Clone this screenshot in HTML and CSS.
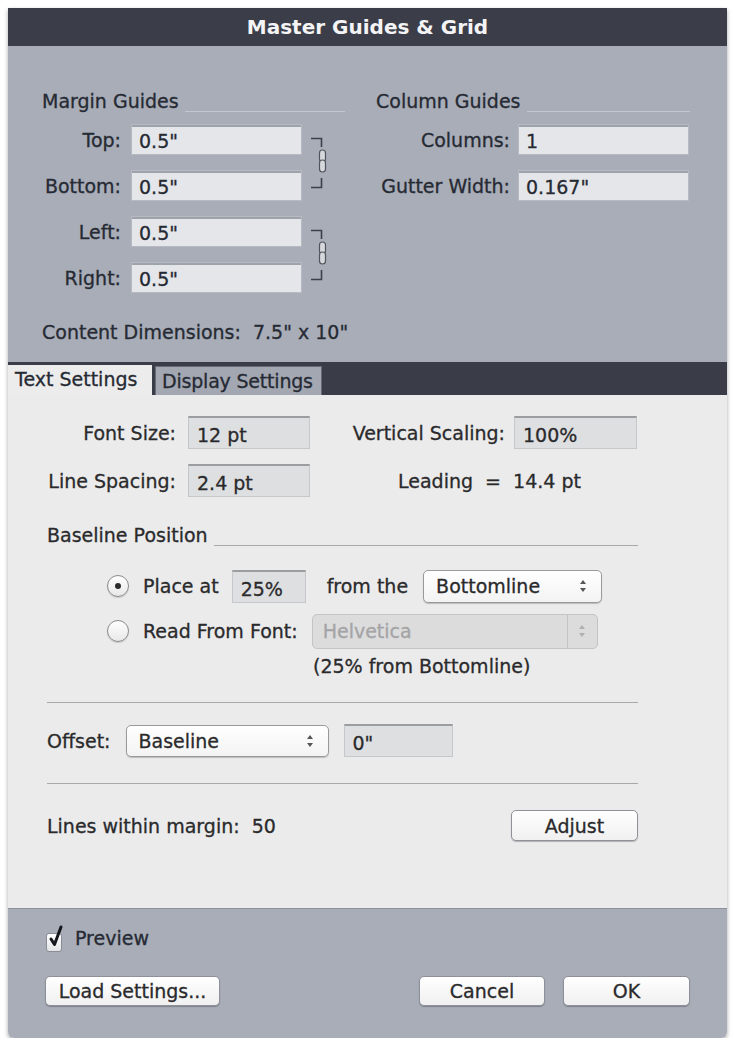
FILE: index.html
```html
<!DOCTYPE html>
<html lang="en">
<head>
    <meta charset="UTF-8">
    <title>Master Guides &amp; Grid</title>
    <link rel="stylesheet" href="styles.css">
</head>
<body>
    <div class="dialog">
        <div class="titlebar">Master Guides &amp; Grid</div>

        <div class="upper">
            <div class="group margin-group">
                <div class="group-title"><span>Margin Guides</span><i class="rule"></i></div>
                <div class="pairs">
                    <div class="pair">
                        <div class="pair-rows">
                            <div class="row"><label>Top:</label><div class="field">0.5"</div></div>
                            <div class="row"><label>Bottom:</label><div class="field">0.5"</div></div>
                        </div>
                        <svg class="link" width="24" height="52" viewBox="0 0 24 52">
                            <path d="M2 1.5H12.5V10M12.5 41V50.5H2" fill="none" stroke="#3c4049" stroke-width="1.6"/>
                            <rect x="10.5" y="13" width="6" height="12" rx="3" fill="#d6d8dc" stroke="#50545c" stroke-width="1.2"/>
                            <rect x="10.5" y="23" width="6" height="12" rx="3" fill="#d6d8dc" stroke="#50545c" stroke-width="1.2"/>
                        </svg>
                    </div>
                    <div class="pair">
                        <div class="pair-rows">
                            <div class="row"><label>Left:</label><div class="field">0.5"</div></div>
                            <div class="row"><label>Right:</label><div class="field">0.5"</div></div>
                        </div>
                        <svg class="link" width="24" height="52" viewBox="0 0 24 52">
                            <path d="M2 1.5H12.5V10M12.5 41V50.5H2" fill="none" stroke="#3c4049" stroke-width="1.6"/>
                            <rect x="10.5" y="13" width="6" height="12" rx="3" fill="#d6d8dc" stroke="#50545c" stroke-width="1.2"/>
                            <rect x="10.5" y="23" width="6" height="12" rx="3" fill="#d6d8dc" stroke="#50545c" stroke-width="1.2"/>
                        </svg>
                    </div>
                </div>
                <div class="dims">Content Dimensions:&nbsp; 7.5" x 10"</div>
            </div>

            <div class="group column-group">
                <div class="group-title"><span>Column Guides</span><i class="rule"></i></div>
                <div class="col-rows">
                    <div class="row"><label>Columns:</label><div class="field">1</div></div>
                    <div class="row"><label>Gutter Width:</label><div class="field">0.167"</div></div>
                </div>
            </div>
        </div>

        <div class="tabs">
            <div class="tab active">Text Settings</div>
            <div class="tab">Display Settings</div>
        </div>

        <div class="panel">
            <div class="metrics">
                <label>Font Size:</label>
                <div class="box">12 pt</div>
                <label>Vertical Scaling:</label>
                <div class="box">100%</div>
                <label>Line Spacing:</label>
                <div class="box">2.4 pt</div>
                <div class="leading">Leading&nbsp; = &nbsp;14.4 pt</div>
            </div>

            <div class="section-title"><span>Baseline Position</span><i class="rule"></i></div>

            <div class="radio-row">
                <span class="radio checked"></span>
                <span class="opt-label">Place at</span>
                <div class="box pct">25%</div>
                <span class="from">from the</span>
                <div class="popup bottomline">Bottomline<svg class="arrows" width="8" height="14" viewBox="0 0 8 14"><path d="M4 1L7 5H1ZM4 13L7 9H1Z" fill="#555"/></svg></div>
            </div>
            <div class="radio-row second">
                <span class="radio"></span>
                <span class="opt-label">Read From Font:</span>
                <div class="popup disabled">Helvetica<span class="sep"><svg width="8" height="14" viewBox="0 0 8 14"><path d="M4 1L7 5H1ZM4 13L7 9H1Z" fill="#b0b0b0"/></svg></span></div>
            </div>
            <div class="note">(25% from Bottomline)</div>

            <hr class="divider">

            <div class="offset-row">
                <span>Offset:</span>
                <div class="popup offset">Baseline<svg class="arrows" width="8" height="14" viewBox="0 0 8 14"><path d="M4 1L7 5H1ZM4 13L7 9H1Z" fill="#555"/></svg></div>
                <div class="box zero">0"</div>
            </div>

            <hr class="divider">

            <div class="lines-row">
                <span>Lines within margin:&nbsp; 50</span>
                <button class="btn adjust">Adjust</button>
            </div>
        </div>

        <div class="footer">
            <div class="preview">
                <span class="check"><svg width="20" height="26" viewBox="0 0 20 26"><path d="M5 16L8.5 21.5L15 4" fill="none" stroke="#15171c" stroke-width="3" stroke-linecap="round" stroke-linejoin="round"/></svg></span>
                <span>Preview</span>
            </div>
            <div class="buttons">
                <button class="btn load">Load Settings...</button>
                <button class="btn cancel">Cancel</button>
                <button class="btn ok">OK</button>
            </div>
        </div>
    </div>
</body>
</html>
```

FILE: styles.css
```css
body {
    margin: 0;
    background-color: #ffffff;
    font-family: "DejaVu Sans", Verdana, sans-serif;
    font-size: 19px;
    color: #262a33;
    -webkit-text-stroke: 0.3px currentColor;
}
.dialog {
    margin: 8px 0 0 8px;
    width: 719px;
    border-radius: 0 0 6px 6px;
    box-shadow: 0 2px 4px rgba(0, 0, 0, 0.35);
    overflow: hidden;
}
.titlebar {
    height: 38px;
    line-height: 38px;
    background-color: #3b3e48;
    color: #f4f4f6;
    font-weight: bold;
    font-size: 20px;
    text-align: center;
    -webkit-text-stroke: 0;
}

/* top gray area */
.upper {
    height: 316px;
    box-sizing: border-box;
    padding: 44px 37px 0 34px;
    background-color: #a8adb8;
    display: grid;
    grid-template-columns: 334px 1fr;
}
.group-title,
.section-title {
    display: flex;
    align-items: flex-end;
    height: 22px;
    line-height: 22px;
}
.rule {
    flex: 1;
    margin-left: 6px;
    border-bottom: 1px solid #c3c6cd;
}
.margin-group .group-title {
    width: 303px;
}
.pairs {
    margin-top: 12px;
    display: flex;
    flex-direction: column;
    gap: 15px;
}
.pair {
    display: flex;
    align-items: center;
    gap: 7px;
}
.pair-rows,
.col-rows {
    display: flex;
    flex-direction: column;
    gap: 15px;
}
.row {
    display: flex;
    align-items: center;
    gap: 10px;
}
.margin-group label {
    width: 79px;
    text-align: right;
}
.col-rows {
    margin-top: 12px;
}
.column-group label {
    width: 134px;
    text-align: right;
}
.column-group .row {
    gap: 8px;
}
.field {
    width: 171px;
    height: 31px;
    line-height: 32px;
    box-sizing: border-box;
    padding-left: 7px;
    background-color: #e5e6e9;
    border: 1px solid #b7bac2;
    box-shadow: inset 0 2px 0 #9ea2ab;
}
.dims {
    margin-top: 28px;
    line-height: 22px;
}

/* tab strip */
.tabs {
    height: 33px;
    background-color: #3a3d47;
    display: flex;
    align-items: flex-end;
}
.tab {
    height: 29px;
    line-height: 28px;
    box-sizing: border-box;
    padding: 0 6px;
    white-space: nowrap;
    letter-spacing: -0.2px;
    background-color: #a2a7b2;
    border: 1px solid #676b74;
    border-bottom: none;
    margin-left: 3px;
    width: 167px;
}
.tab.active {
    margin-left: 0;
    height: 30px;
    width: 144px;
    letter-spacing: 0;
    background-color: #ececec;
    border: none;
    padding-left: 7px;
}

/* light settings panel */
.panel {
    height: 513px;
    box-sizing: border-box;
    padding: 21px 89px 0 39px;
    background-color: #ebebeb;
    color: #2a2a2c;
}
.metrics {
    display: grid;
    grid-template-columns: 141px 122px 204px 123px;
    row-gap: 15px;
    align-items: center;
}
.metrics label {
    text-align: right;
    padding-right: 12px;
}
.metrics label:nth-of-type(2) {
    padding-right: 9px;
}
.box {
    height: 33px;
    line-height: 35px;
    box-sizing: border-box;
    padding-left: 8px;
    background-color: #dedfe1;
    border: 1px solid #c6c7ca;
    border-top: 2px solid #9c9da1;
}
.leading {
    grid-column: 3 / 5;
    padding-left: 88px;
}
.section-title {
    margin-top: 27px;
}
.section-title .rule {
    border-bottom-color: #a9a9a9;
}
.radio-row {
    margin-top: 23px;
    padding-left: 60px;
    display: flex;
    align-items: center;
    height: 34px;
}
.radio-row.second {
    margin-top: 11px;
}
.radio {
    width: 22px;
    height: 22px;
    box-sizing: border-box;
    border-radius: 50%;
    border: 1px solid #8b8b8d;
    background: linear-gradient(#ffffff, #e8e8e8);
    box-shadow: 0 1px 1px rgba(0, 0, 0, 0.15);
    display: flex;
    align-items: center;
    justify-content: center;
}
.radio.checked::after {
    content: "";
    width: 6px;
    height: 6px;
    border-radius: 50%;
    background-color: #2b2b2b;
}
.opt-label {
    margin-left: 14px;
}
.pct {
    width: 74px;
    margin-left: 13px;
}
.from {
    margin-left: 21px;
}
.popup {
    height: 33px;
    box-sizing: border-box;
    padding-left: 12px;
    display: flex;
    align-items: center;
    justify-content: space-between;
    border: 1px solid #9a9a9c;
    border-radius: 5px;
    background: linear-gradient(#ffffff, #f3f3f3);
    box-shadow: 0 1px 1px rgba(0, 0, 0, 0.2);
}
.popup .arrows {
    margin-right: 14px;
}
.bottomline {
    width: 179px;
    margin-left: 15px;
}
.disabled {
    width: 286px;
    height: 35px;
    margin-left: 14px;
    padding-left: 10px;
    color: #a4a4a6;
    background: #dcdcdd;
    border-color: #c4c4c6;
    box-shadow: none;
}
.disabled .sep {
    height: 100%;
    width: 29px;
    border-left: 1px solid #c4c4c6;
    display: flex;
    align-items: center;
    justify-content: center;
}
.note {
    margin-top: 7px;
    padding-left: 266px;
    line-height: 22px;
}
.divider {
    margin: 25px 0 0;
    border: none;
    border-top: 1px solid #a9a9a9;
    height: 0;
}
.offset-row {
    margin-top: 21px;
    display: flex;
    align-items: center;
    height: 33px;
}
.offset {
    width: 203px;
    height: 32px;
    margin-left: 15px;
}
.zero {
    width: 109px;
    margin-left: 15px;
}
.offset-row + .divider {
    margin-top: 26px;
}
.lines-row {
    margin-top: 26px;
    display: flex;
    align-items: center;
    justify-content: space-between;
}
.btn {
    font-family: inherit;
    font-size: 19px;
    color: #2a2a2c;
    -webkit-text-stroke: 0.3px #2a2a2c;
    height: 31px;
    padding: 0;
    box-sizing: border-box;
    border: 1px solid #8e9199;
    border-radius: 5px;
    background: linear-gradient(#ffffff, #f0f0f0);
    box-shadow: 0 1px 1px rgba(0, 0, 0, 0.25);
}
.adjust {
    width: 127px;
}

/* bottom gray area */
.footer {
    height: 130px;
    box-sizing: border-box;
    padding: 13px 37px 0 37px;
    background-color: #a8adb8;
    border-top: 1px solid #8d919b;
}
.preview {
    display: flex;
    align-items: center;
    gap: 13px;
    height: 32px;
}
.check {
    position: relative;
    width: 16px;
    height: 19px;
    margin-left: 1px;
    margin-top: 8px;
    box-sizing: border-box;
    border: 1px solid #8a8d95;
    border-radius: 3px;
    background: linear-gradient(#ffffff, #e2e3e6);
}
.check svg {
    position: absolute;
    left: -1px;
    top: -11px;
}
.buttons {
    margin-top: 22px;
    display: flex;
    align-items: center;
}
.buttons .btn {
    height: 30px;
}
.load {
    width: 175px;
}
.cancel {
    width: 126px;
    margin-left: auto;
}
.ok {
    width: 127px;
    margin-left: 18px;
}
```
